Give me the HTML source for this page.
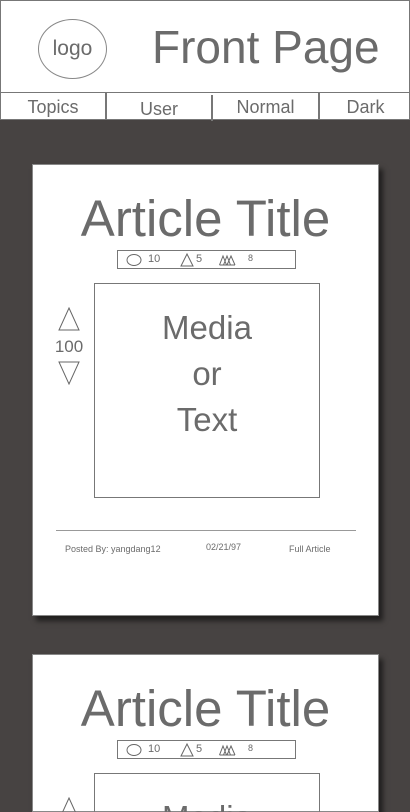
<!DOCTYPE html>
<html style="height:812px;overflow:hidden"><head><meta charset="utf-8"><style>
*{margin:0;padding:0;box-sizing:border-box}
body{width:410px;height:812px;overflow:hidden;background:#474342;font-family:"Liberation Sans",sans-serif;color:#6b6b6b;position:relative}
.hdr{position:absolute;left:0;top:0;width:410px;height:93px;background:#fff;border:1px solid #777}
.logo{position:absolute;left:37px;top:18px;width:69px;height:60px;border:1px solid #888;border-radius:50%;text-align:center;line-height:58px;font-size:21px}
.fp{position:absolute;left:151px;top:20px;font-size:46px;line-height:52px}
.nav{position:absolute;left:0;top:93px;width:410px;height:27px;background:#fff;border:1px solid #777;border-top:0}
.nav div{position:absolute;top:0;height:26px;line-height:28px;text-align:center;font-size:18px;border-right:2px solid #777}
.card{position:absolute;left:32px;width:347px;height:452px;background:#fff;border:1px solid #888;box-shadow:4px 5px 5px rgba(0,0,0,.55)}
.t{position:absolute;left:0;width:100%;top:25px;text-align:center;font-size:51px;line-height:58px}
.st{position:absolute;left:84px;top:85px;width:179px;height:19px;border:1px solid #777;font-size:11px}
.st span{position:absolute;top:2px}
.m{position:absolute;left:61px;top:118px;width:226px;height:215px;border:1px solid #777;text-align:center;font-size:33px;line-height:46px;padding-top:21px}
.v{position:absolute;left:18px;top:172px;width:36px;text-align:center;font-size:17px}
.ln{position:absolute;left:23px;top:365px;width:300px;height:1px;background:#999}
.f{position:absolute;top:379px;font-size:9px}
</style></head><body>
<div class="hdr"><div class="logo">logo</div><div class="fp">Front Page</div></div>
<div class="nav">
<div style="left:0;width:106px">Topics</div>
<div style="left:106px;width:106px;top:2px">User</div>
<div style="left:212px;width:107px">Normal</div>
<div style="left:319px;width:91px;border:0">Dark</div>
</div>

<div class="card" style="top:164px">
<div class="t">Article Title</div>
<div class="st">
<svg style="position:absolute;left:8px;top:2px" width="60" height="14"><ellipse cx="8" cy="7" rx="7" ry="5.5" fill="none" stroke="#666"/></svg>
<span style="left:30px">10</span>
<svg style="position:absolute;left:62px;top:2px" width="14" height="14"><path d="M7 1 L13 13 L1 13 Z" fill="none" stroke="#666"/></svg>
<span style="left:78px">5</span>
<svg style="position:absolute;left:101px;top:3px" width="24" height="12"><path d="M0.5 11 L4 2 L7.5 11 M4.5 11 L8 2 L11.5 11 M8 11 L12 2 L16 11 M0.5 11 L16 11" fill="none" stroke="#666"/></svg>
<span style="left:130px;font-size:9px">8</span>
</div>
<svg style="position:absolute;left:25px;top:142px" width="22" height="78"><path d="M11 1 L21 23 L1 23 Z M1 55 L21 55 L11 77 Z" fill="none" stroke="#666"/></svg>
<div class="v">100</div>
<div class="m">Media<br>or<br>Text</div>
<div class="ln"></div>
<div class="f" style="left:32px">Posted By: yangdang12</div>
<div class="f" style="left:173px;top:377px">02/21/97</div>
<div class="f" style="left:256px">Full Article</div>
</div>

<div class="card" style="top:654px;height:158px">
<div class="t">Article Title</div>
<div class="st">
<svg style="position:absolute;left:8px;top:2px" width="60" height="14"><ellipse cx="8" cy="7" rx="7" ry="5.5" fill="none" stroke="#666"/></svg>
<span style="left:30px">10</span>
<svg style="position:absolute;left:62px;top:2px" width="14" height="14"><path d="M7 1 L13 13 L1 13 Z" fill="none" stroke="#666"/></svg>
<span style="left:78px">5</span>
<svg style="position:absolute;left:101px;top:3px" width="24" height="12"><path d="M0.5 11 L4 2 L7.5 11 M4.5 11 L8 2 L11.5 11 M8 11 L12 2 L16 11 M0.5 11 L16 11" fill="none" stroke="#666"/></svg>
<span style="left:130px;font-size:9px">8</span>
</div>
<svg style="position:absolute;left:25px;top:142px" width="22" height="24"><path d="M11 1 L21 23 L1 23 Z" fill="none" stroke="#666"/></svg>
<div class="m" style="height:60px">Media</div>
</div>
</body></html>
